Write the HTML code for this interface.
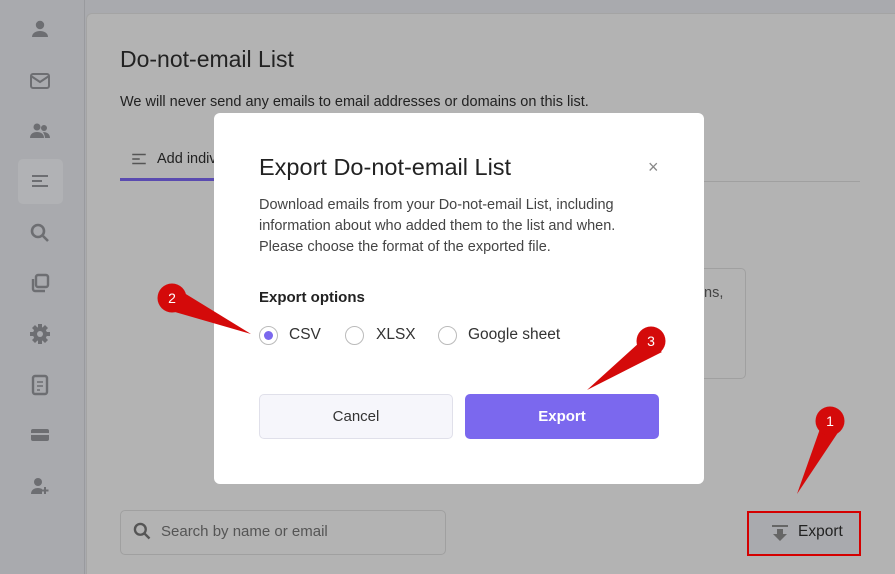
<!DOCTYPE html><html><head><style>
*{box-sizing:border-box;margin:0;padding:0}
html,body{width:895px;height:574px;overflow:hidden}
body{background:#a9aaae;font-family:"Liberation Sans",Roboto,sans-serif;position:relative;color:#222}
.side{position:absolute;left:0;top:0;width:85px;height:574px;border-right:1px solid #999a9e}
.ic{position:absolute;left:28px;width:24px;height:24px}
.panel{position:absolute;left:86px;top:13px;width:809px;height:561px;background:#b3b3b3;border-radius:6px 0 0 0;border:1px solid #a4a4a4;border-right:none;border-bottom:none}
.abs{position:absolute}
.modal{position:absolute;left:214px;top:113px;width:490px;height:371px;background:#fff;border-radius:6px}
.radio{position:absolute;width:19px;height:19px;border:1px solid #bbb;border-radius:50%;top:326px}
</style></head><body>
<div class="side">
<svg class="ic" style="top:17px" viewBox="0 0 24 24" fill="#6d6e72"><circle cx="12" cy="8" r="4.2"/><path d="M4 20c0-4 4-6 8-6s8 2 8 6z"/></svg>
<svg class="ic" style="top:69px" viewBox="0 0 24 24" fill="none" stroke="#6d6e72" stroke-width="2"><rect x="3" y="5" width="18" height="14" rx="2"/><path d="M3 7l9 6 9-6"/></svg>
<svg class="ic" style="top:119px" viewBox="0 0 24 24" fill="#6d6e72"><circle cx="9" cy="8" r="3.5"/><circle cx="16" cy="9" r="3"/><path d="M2 19c0-4 3-6 7-6s7 2 7 6z"/><path d="M15 13c4 0 7 2 7 6h-5c0-2-1-4-2-6z"/></svg>
<div class="abs" style="left:18px;top:159px;width:45px;height:45px;background:#b1b2b5;border-radius:5px"></div>
<svg class="ic" style="top:169px" viewBox="0 0 24 24" stroke="#6d6e72" stroke-width="2"><path d="M4 7h16M4 12h10M4 17h16"/></svg>
<svg class="ic" style="top:221px" viewBox="0 0 24 24" fill="none" stroke="#6d6e72" stroke-width="2.6"><circle cx="10" cy="10" r="6"/><path d="M15 15l5 5"/></svg>
<svg class="ic" style="top:271px" viewBox="0 0 24 24" fill="none" stroke="#6d6e72" stroke-width="2.4"><rect x="8" y="4" width="12" height="12" rx="2"/><path d="M5 8v10a2 2 0 0 0 2 2h10"/></svg>
<svg class="ic" style="top:322px" viewBox="0 0 24 24" fill="#6d6e72"><circle cx="12" cy="12" r="7"/><path d="M10 2h4v4h-4zM10 18h4v4h-4zM2 10h4v4H2zM18 10h4v4h-4zM4 6l3-3 3 3-3 3zM14 18l3-3 3 3-3 3zM4 18l3-3 3 3-3 3zM14 6l3-3 3 3-3 3z"/><circle cx="12" cy="12" r="3" fill="#a9aaae"/></svg>
<svg class="ic" style="top:373px" viewBox="0 0 24 24" fill="none" stroke="#6d6e72" stroke-width="2.4"><rect x="5" y="3" width="14" height="18" rx="2"/><path d="M9 9h6M9 13h6M9 17h3" stroke-width="1.6"/></svg>
<svg class="ic" style="top:423px" viewBox="0 0 24 24" fill="#6d6e72"><rect x="3" y="6" width="18" height="12" rx="2"/><rect x="3" y="10" width="18" height="2" fill="#a9aaae"/></svg>
<svg class="ic" style="top:474px" viewBox="0 0 24 24" fill="#6d6e72"><circle cx="10" cy="8" r="4"/><path d="M3 20c0-4 3-6 7-6 2 0 3 .5 4 1v5z"/><path d="M17 13v7M13.5 16.5h7" stroke="#6d6e72" stroke-width="2"/></svg>
</div>
<div class="panel"></div>
<div class="abs" style="left:120px;top:46px;font-size:23px;color:#222">Do-not-email List</div>
<div class="abs" style="left:120px;top:94px;font-size:14.5px;color:#222">We will never send any emails to email addresses or domains on this list.</div>
<svg class="abs" style="left:130px;top:150px" width="18" height="18" viewBox="0 0 24 24" stroke="#555" stroke-width="2"><path d="M3 6h18M3 12h10M3 18h18"/></svg>
<div class="abs" style="left:157px;top:151px;font-size:14.5px">Add individ</div>
<div class="abs" style="left:120px;top:178px;width:100px;height:3px;background:#5a4bb0"></div>
<div class="abs" style="left:700px;top:181px;width:160px;height:1px;background:#a0a0a0"></div>
<div class="abs" style="left:680px;top:268px;width:66px;height:111px;border:1px solid #a0a0a0;border-radius:5px"></div>
<div class="abs" style="left:704px;top:285px;font-size:14.5px;color:#444">ns,</div>
<div class="abs" style="left:120px;top:510px;width:326px;height:45px;border:1px solid #a0a0a0;border-radius:5px"></div>
<svg class="abs" style="left:132px;top:521px" width="20" height="20" viewBox="0 0 24 24" fill="none" stroke="#555" stroke-width="2.8"><circle cx="10" cy="10" r="6.5"/><path d="M15 15l6 6"/></svg>
<div class="abs" style="left:161px;top:523px;font-size:15px;color:#555">Search by name or email</div>
<div class="abs" style="left:747px;top:511px;width:114px;height:45px;border:2px solid #d40000;background:#a9aaae"></div>
<svg class="abs" style="left:771px;top:524px" width="18" height="18" viewBox="0 0 18 18" fill="#666"><rect x="1" y="1" width="16" height="2"/><path d="M6 5h6v5h4l-7 7-7-7h4z"/></svg>
<div class="abs" style="left:798px;top:523px;font-size:15.5px;color:#222">Export</div>
<div class="modal"></div>
<div class="abs" style="left:259px;top:154px;font-size:23.5px;color:#222">Export Do-not-email List</div>
<div class="abs" style="left:648px;top:157px;font-size:18px;color:#888">×</div>
<div class="abs" style="left:259px;top:195px;font-size:14.5px;line-height:21px;color:#444;width:372px">Download emails from your Do-not-email List, including information about who added them to the list and when. Please choose the format of the exported file.</div>
<div class="abs" style="left:259px;top:289px;font-size:15px;font-weight:bold;color:#222">Export options</div>
<div class="radio" style="left:259px"><div style="position:absolute;left:4px;top:4px;width:9px;height:9px;border-radius:50%;background:#7b68ee"></div></div>
<div class="abs" style="left:289px;top:326px;font-size:15.5px;color:#333">CSV</div>
<div class="radio" style="left:345px"></div>
<div class="abs" style="left:376px;top:326px;font-size:15.5px;color:#333">XLSX</div>
<div class="radio" style="left:438px"></div>
<div class="abs" style="left:468px;top:326px;font-size:15.5px;color:#333">Google sheet</div>
<div class="abs" style="left:259px;top:394px;width:194px;height:45px;border:1px solid #e0e0ea;background:#f6f6fb;border-radius:5px;text-align:center;line-height:43px;font-size:15px;color:#333">Cancel</div>
<div class="abs" style="left:465px;top:394px;width:194px;height:45px;background:#7b68ee;border-radius:5px;text-align:center;line-height:45px;font-size:15px;color:#fff;font-weight:bold">Export</div>
<svg class="abs" style="left:0;top:0" width="895" height="574" fill="#d40a0a">
<path d="M821 426L797 494L841 428z"/><circle cx="830" cy="421" r="14.5"/>
<path d="M176 288L251 334L168 310z"/><circle cx="172" cy="298" r="14.5"/>
<path d="M640 342L587 390L662 352z"/><circle cx="651" cy="341" r="14.5"/>
<g fill="#fff" font-family="Liberation Sans,sans-serif" font-size="14" text-anchor="middle"><text x="830" y="426">1</text><text x="172" y="303">2</text><text x="651" y="346">3</text></g>
</svg>
</body></html>
